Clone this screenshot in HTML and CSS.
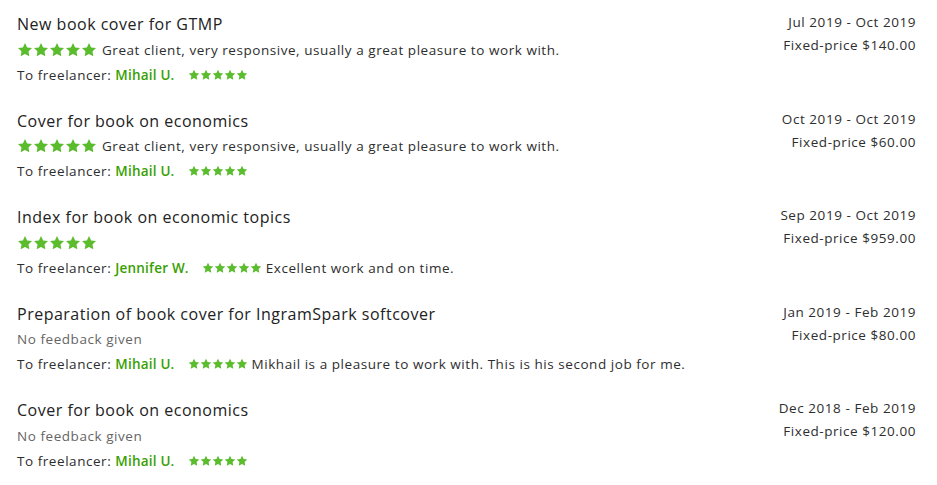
FILE: index.html
```html
<!DOCTYPE html>
<html lang="en">
<head>
  <meta charset="UTF-8" />
  <title>Work history</title>
  <link rel="stylesheet" href="styles.css">
</head>
<body>
  <svg width="0" height="0" class="defs">
    <defs>
      <symbol id="star" viewBox="0 0 24 24">
        <path d="M12 1.5l3.2 6.6 7.3 1-5.3 5.1 1.3 7.2L12 18l-6.5 3.4 1.3-7.2L1.5 9.1l7.3-1z"/>
      </symbol>
      <symbol id="stars" viewBox="0 0 120 24">
        <use href="#star" x="0" width="24" height="24"/>
        <use href="#star" x="24" width="24" height="24"/>
        <use href="#star" x="48" width="24" height="24"/>
        <use href="#star" x="72" width="24" height="24"/>
        <use href="#star" x="96" width="24" height="24"/>
      </symbol>
    </defs>
  </svg>

  <ul class="jobs">
    <li class="job">
      <div class="job-main">
        <div class="job-title">New book cover for GTMP</div>
        <div class="job-line">
          <svg class="stars-lg"><use href="#stars"/></svg>
          <span>Great client, very responsive, usually a great pleasure to work with.</span>
        </div>
        <div class="job-line">
          <span>To freelancer: <a href="#" class="name">Mihail U.</a></span>
          <svg class="stars-sm"><use href="#stars"/></svg>
        </div>
      </div>
      <div class="job-meta">
        <div>Jul 2019 - Oct 2019</div>
        <div>Fixed-price $140.00</div>
      </div>
    </li>

    <li class="job">
      <div class="job-main">
        <div class="job-title">Cover for book on economics</div>
        <div class="job-line">
          <svg class="stars-lg"><use href="#stars"/></svg>
          <span>Great client, very responsive, usually a great pleasure to work with.</span>
        </div>
        <div class="job-line">
          <span>To freelancer: <a href="#" class="name">Mihail U.</a></span>
          <svg class="stars-sm"><use href="#stars"/></svg>
        </div>
      </div>
      <div class="job-meta">
        <div>Oct 2019 - Oct 2019</div>
        <div>Fixed-price $60.00</div>
      </div>
    </li>

    <li class="job">
      <div class="job-main">
        <div class="job-title">Index for book on economic topics</div>
        <div class="job-line">
          <svg class="stars-lg"><use href="#stars"/></svg>
        </div>
        <div class="job-line">
          <span>To freelancer: <a href="#" class="name">Jennifer W.</a></span>
          <svg class="stars-sm"><use href="#stars"/></svg>
          <span>Excellent work and on time.</span>
        </div>
      </div>
      <div class="job-meta">
        <div>Sep 2019 - Oct 2019</div>
        <div>Fixed-price $959.00</div>
      </div>
    </li>

    <li class="job">
      <div class="job-main">
        <div class="job-title">Preparation of book cover for IngramSpark softcover</div>
        <div class="job-line muted">No feedback given</div>
        <div class="job-line">
          <span>To freelancer: <a href="#" class="name">Mihail U.</a></span>
          <svg class="stars-sm"><use href="#stars"/></svg>
          <span>Mikhail is a pleasure to work with. This is his second job for me.</span>
        </div>
      </div>
      <div class="job-meta">
        <div>Jan 2019 - Feb 2019</div>
        <div>Fixed-price $80.00</div>
      </div>
    </li>

    <li class="job">
      <div class="job-main">
        <div class="job-title">Cover for book on economics</div>
        <div class="job-line muted">No feedback given</div>
        <div class="job-line">
          <span>To freelancer: <a href="#" class="name">Mihail U.</a></span>
          <svg class="stars-sm"><use href="#stars"/></svg>
        </div>
      </div>
      <div class="job-meta">
        <div>Dec 2018 - Feb 2019</div>
        <div>Fixed-price $120.00</div>
      </div>
    </li>
  </ul>
</body>
</html>
```

FILE: styles.css
```css
* {
  margin: 0;
  padding: 0;
  box-sizing: border-box;
}

body {
  background: #fff;
  font-family: 'Open Sans', sans-serif;
  font-size: 13.5px;
  letter-spacing: 0.55px;
  color: #2e2e2e;
}

.defs {
  position: absolute;
}

.jobs {
  list-style: none;
  padding: 0 21px 0 17px;
}

.job {
  display: flex;
  justify-content: space-between;
  padding: 12px 0 9.5px;
}

.job-title {
  font-size: 16px;
  line-height: 25px;
  letter-spacing: 0.5px;
  color: #222;
}

.job-line {
  display: flex;
  align-items: center;
  height: 25px;
}

.muted {
  color: #656565;
}

.name {
  color: #37a000;
  font-weight: 600;
  letter-spacing: 0.2px;
  text-decoration: none;
}

.stars-lg {
  width: 80px;
  height: 16px;
  fill: #5bbc2e;
  margin-right: 5px;
}

.stars-sm {
  width: 60px;
  height: 12px;
  fill: #5bbc2e;
  margin: 0 4px 0 13px;
}

.job-meta {
  text-align: right;
  line-height: 23px;
  margin-top: -1px;
}
```
